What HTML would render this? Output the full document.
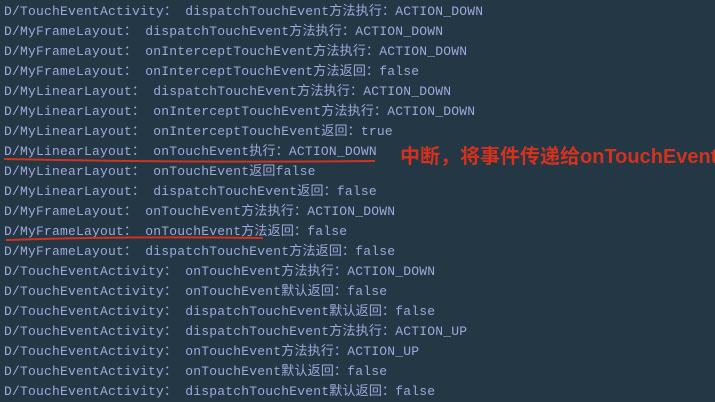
<!DOCTYPE html>
<html><head><meta charset="utf-8"><style>
html,body{margin:0;padding:0;width:715px;height:402px;overflow:hidden;background:#243744;}
.log{position:absolute;left:4px;top:2px;font-family:"Liberation Mono","Noto Sans CJK SC",monospace;font-size:13px;line-height:20px;color:#a0a8dc;white-space:pre;letter-spacing:0.2px;}
.note{position:absolute;left:400px;top:140px;font-family:"Liberation Sans","Noto Sans CJK SC",sans-serif;font-size:20px;color:#d2321e;white-space:nowrap;font-weight:bold;letter-spacing:0px;}
svg{position:absolute;left:0;top:0;}
</style></head><body>
<div class="log">D/TouchEventActivity： dispatchTouchEvent方法执行：ACTION_DOWN
D/MyFrameLayout： dispatchTouchEvent方法执行：ACTION_DOWN
D/MyFrameLayout： onInterceptTouchEvent方法执行：ACTION_DOWN
D/MyFrameLayout： onInterceptTouchEvent方法返回：false
D/MyLinearLayout： dispatchTouchEvent方法执行：ACTION_DOWN
D/MyLinearLayout： onInterceptTouchEvent方法执行：ACTION_DOWN
D/MyLinearLayout： onInterceptTouchEvent返回：true
D/MyLinearLayout： onTouchEvent执行：ACTION_DOWN
D/MyLinearLayout： onTouchEvent返回false
D/MyLinearLayout： dispatchTouchEvent返回：false
D/MyFrameLayout： onTouchEvent方法执行：ACTION_DOWN
D/MyFrameLayout： onTouchEvent方法返回：false
D/MyFrameLayout： dispatchTouchEvent方法返回：false
D/TouchEventActivity： onTouchEvent方法执行：ACTION_DOWN
D/TouchEventActivity： onTouchEvent默认返回：false
D/TouchEventActivity： dispatchTouchEvent默认返回：false
D/TouchEventActivity： dispatchTouchEvent方法执行：ACTION_UP
D/TouchEventActivity： onTouchEvent方法执行：ACTION_UP
D/TouchEventActivity： onTouchEvent默认返回：false
D/TouchEventActivity： dispatchTouchEvent默认返回：false</div>
<div class="note">中断，将事件传递给onTouchEvent</div>
<svg width="715" height="402"><path d="M4 159 Q190 163 375 161" stroke="#d2321e" stroke-width="2" fill="none"/><path d="M6 240 Q130 236 263 238" stroke="#d2321e" stroke-width="2" fill="none"/></svg>
</body></html>
